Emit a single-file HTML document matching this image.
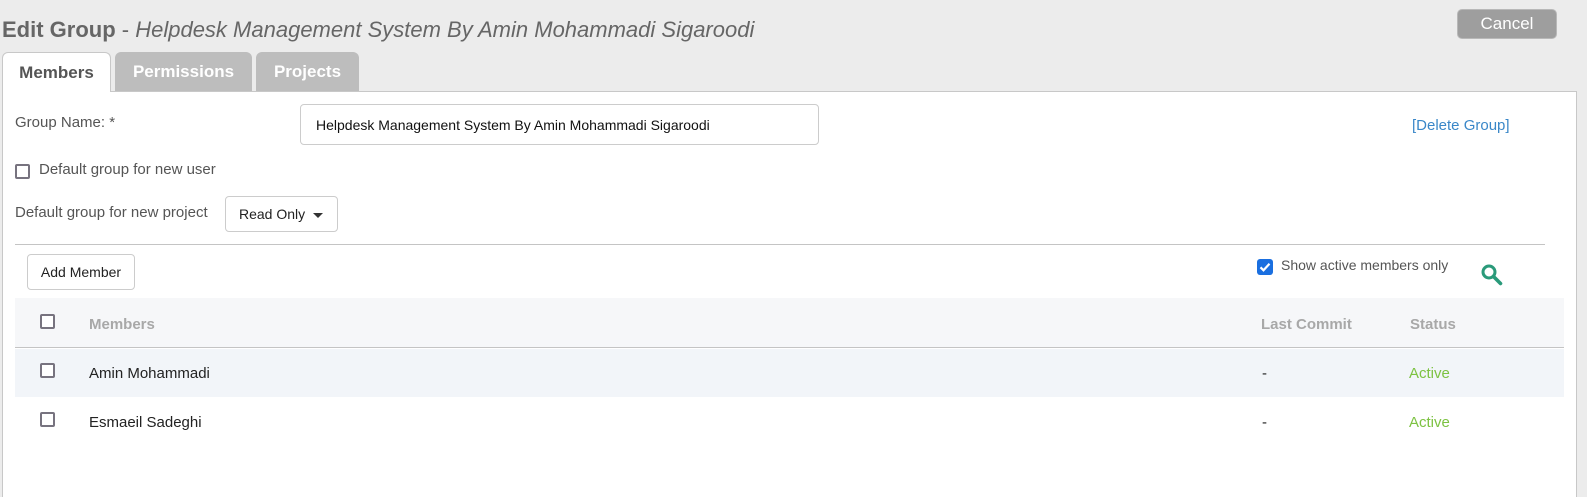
<!DOCTYPE html>
<html style="width:1587px;height:497px;overflow:hidden"><head><meta charset="utf-8"><style>
*{box-sizing:border-box;margin:0;padding:0}
html,body{width:1587px;height:497px;overflow:hidden}
body{background:#ececec;font-family:"Liberation Sans",Arial,sans-serif;position:relative;color:#333}
.a{position:absolute;white-space:nowrap}
.cb{position:absolute;width:15px;height:15px;border:2px solid #77737f;border-radius:2px;background:#fff}
</style></head><body>
<div class="a" style="left:2px;top:17px;font-size:22px;color:#666"><b>Edit Group</b> - <i>Helpdesk Management System By Amin Mohammadi Sigaroodi</i></div>
<div class="a" style="left:1457px;top:9px;width:100px;height:30px;background:#9e9e9e;border:1px solid #b8b8b8;border-radius:5px;color:#fff;font-size:17px;text-align:center;line-height:28px">Cancel</div>
<div class="a" style="left:2px;top:91px;width:1575px;height:406px;background:#fff;border:1px solid #c8c8c8;border-bottom:none"></div>
<div class="a" style="left:2px;top:52px;width:109px;height:40px;background:#fff;border:1px solid #c8c8c8;border-bottom:none;border-radius:6px 6px 0 0;font-size:17px;font-weight:bold;color:#555;text-align:center;line-height:40px">Members</div>
<div class="a" style="left:115px;top:52px;width:137px;height:39px;background:#bdbdbd;border-radius:6px 6px 0 0;font-size:17px;font-weight:bold;color:#fff;text-align:center;line-height:40px">Permissions</div>
<div class="a" style="left:256px;top:52px;width:103px;height:39px;background:#bdbdbd;border-radius:6px 6px 0 0;font-size:17px;font-weight:bold;color:#fff;text-align:center;line-height:40px">Projects</div>
<div class="a" style="left:15px;top:114px;font-size:15px;color:#555">Group Name: *</div>
<div class="a" style="left:300px;top:104px;width:519px;height:41px;border:1px solid #ccc;border-radius:4px;font-size:14px;color:#111;padding-left:15px;line-height:41px">Helpdesk Management System By Amin Mohammadi Sigaroodi</div>
<div class="a" style="left:1412px;top:117px;font-size:15px;color:#3a87c8">[Delete Group]</div>
<div class="cb" style="left:15px;top:164px"></div>
<div class="a" style="left:39px;top:161px;font-size:15px;color:#555">Default group for new user</div>
<div class="a" style="left:15px;top:204px;font-size:15px;color:#555">Default group for new project</div>
<div class="a" style="left:225px;top:196px;width:113px;height:36px;border:1px solid #ccc;border-radius:4px;font-size:14px;color:#222;padding-left:13px;line-height:34px">Read Only <span style="display:inline-block;width:0;height:0;border-left:5px solid transparent;border-right:5px solid transparent;border-top:5px solid #333;vertical-align:middle;margin-left:4px"></span></div>
<div class="a" style="left:15px;top:244px;width:1530px;height:1px;background:#c4c4c4"></div>
<div class="a" style="left:27px;top:254px;width:108px;height:36px;border:1px solid #ccc;border-radius:4px;font-size:14px;color:#222;text-align:center;line-height:34px">Add Member</div>
<div class="a" style="left:1257px;top:259px;width:16px;height:16px;background:#1a6fe0;border-radius:3px"><svg width="16" height="16" viewBox="0 0 16 16"><path d="M3.5 8.3l3 3 6-6.5" stroke="#fff" stroke-width="2.2" fill="none"/></svg></div>
<div class="a" style="left:1281px;top:257px;font-size:14px;color:#555">Show active members only</div>
<svg class="a" style="left:1480px;top:263px" width="24" height="24" viewBox="0 0 24 24"><circle cx="9" cy="9" r="6" stroke="#2a9a7a" stroke-width="3" fill="none"/><path d="M13.5 13.5l7 7" stroke="#2a9a7a" stroke-width="3.6" stroke-linecap="round"/></svg>
<div class="a" style="left:15px;top:298px;width:1549px;height:50px;background:#f6f7f9;border-bottom:1px solid #c4c4c4"></div>
<div class="cb" style="left:40px;top:314px"></div>
<div class="a" style="left:89px;top:316px;font-size:15px;font-weight:bold;color:#a8a8a8">Members</div>
<div class="a" style="left:1261px;top:316px;font-size:15px;font-weight:bold;color:#a8a8a8">Last Commit</div>
<div class="a" style="left:1410px;top:316px;font-size:15px;font-weight:bold;color:#a8a8a8">Status</div>
<div class="a" style="left:15px;top:349px;width:1549px;height:48px;background:#f2f5f9"></div>
<div class="cb" style="left:40px;top:363px"></div>
<div class="a" style="left:89px;top:365px;font-size:15px;color:#222">Amin Mohammadi</div>
<div class="a" style="left:1262px;top:365px;font-size:15px;color:#222">-</div>
<div class="a" style="left:1409px;top:365px;font-size:15px;color:#7cc241">Active</div>
<div class="cb" style="left:40px;top:412px"></div>
<div class="a" style="left:89px;top:414px;font-size:15px;color:#222">Esmaeil Sadeghi</div>
<div class="a" style="left:1262px;top:414px;font-size:15px;color:#222">-</div>
<div class="a" style="left:1409px;top:414px;font-size:15px;color:#7cc241">Active</div>
</body></html>
